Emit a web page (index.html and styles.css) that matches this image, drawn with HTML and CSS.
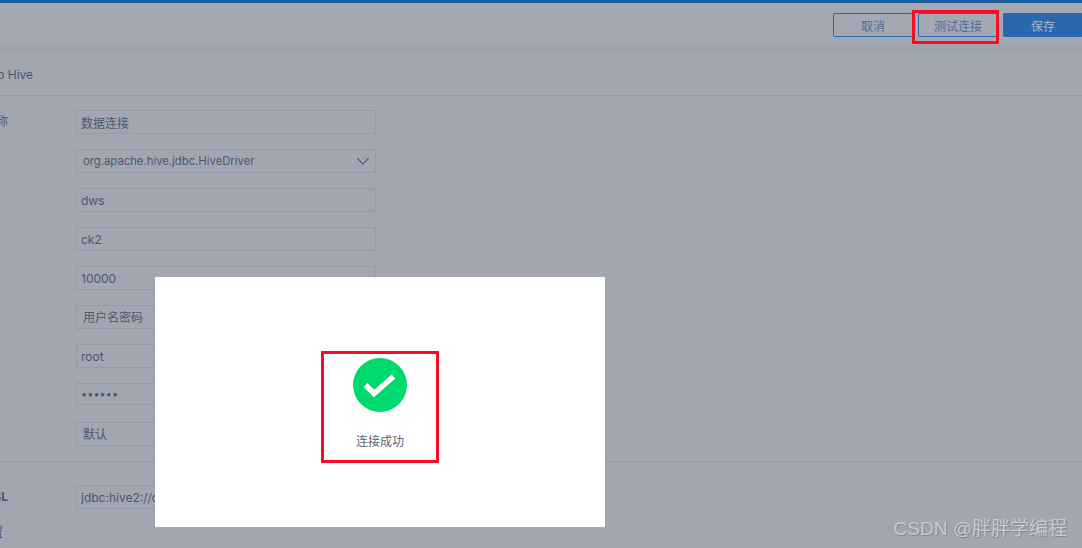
FILE: index.html
```html
<!DOCTYPE html>
<html lang="zh-CN">
<head>
  <meta charset="UTF-8">
  <title>数据连接</title>
  <link rel="stylesheet" href="styles.css">
</head>
<body>
  <div class="header">
    <button class="btn">取消</button>
    <button class="btn">测试连接</button>
    <button class="btn btn-primary">保存</button>
  </div>
  <div class="band"></div>

  <div class="panel">
    <div class="title">p Hive</div>
    <form class="form">
      <div class="row"><label>称</label><input class="field" type="text" value="数据连接"></div>
      <div class="row">
        <label></label>
        <div class="field select select-driver">
          <span class="driver">org.apache.hive.jdbc.HiveDriver</span>
          <svg width="12" height="7" viewBox="0 0 12 7"><path d="M.5.5L6 6l5.500-5.500" fill="none" stroke="#4d5a74" stroke-width="1.1"/></svg>
        </div>
      </div>
      <div class="row"><label></label><input class="field" type="text" value="dws"></div>
      <div class="row"><label></label><input class="field" type="text" value="ck2"></div>
      <div class="row"><label></label><input class="field" type="text" value="10000"></div>
      <div class="row"><label></label><div class="field select"><span>用户名密码</span></div></div>
      <div class="row"><label></label><input class="field" type="text" value="root"></div>
      <div class="row"><label></label><input class="field field-pass" type="password" value="123456"></div>
      <div class="row"><label></label><div class="field select"><span>默认</span></div></div>
      <hr class="divider">
      <div class="row"><label class="bold">BL</label><input class="field" type="text" value="jdbc:hive2://ck2:10000/dws"></div>
      <div class="row"><label class="last">置</label></div>
    </form>
  </div>

  <div class="mark mark-test"></div>

  <div class="dialog">
    <div class="result">
      <svg width="54" height="54" viewBox="0 0 54 54">
        <circle cx="27" cy="27" r="27" fill="#00d96b"/>
        <path d="M12.500 27l8.500 8.500L40.500 18.500" fill="none" stroke="#fff" stroke-width="5.500"/>
      </svg>
      <p>连接成功</p>
    </div>
  </div>

  <div class="watermark">CSDN @胖胖学编程</div>
</body>
</html>
```

FILE: styles.css
```css
* {
  box-sizing: border-box;
}

body {
  margin: 0;
  height: 548px;
  overflow: hidden;
  position: relative;
  background-color: #a2a6b0;
  font-family: Inter, "Noto Sans CJK SC", sans-serif;
  font-size: 12px;
  color: #4b5872;
}

.header {
  height: 45px;
  padding-top: 10px;
  margin-right: -1px;
  border-top: 3px solid #1a5d9c;
  background-color: #a4a8b2;
  display: flex;
  justify-content: flex-end;
  gap: 5px;
}

.btn {
  width: 80px;
  height: 24px;
  padding: 0;
  background: transparent;
  border: 1px solid #2a69ad;
  border-radius: 2px;
  font-family: inherit;
  font-size: 12px;
  color: #4d6c9e;
}

.btn-primary {
  background-color: #2a69ad;
  color: #a4b3c9;
}

.band {
  height: 9px;
  background-color: #9ea2ab;
}

.title {
  height: 42px;
  margin-left: -3px;
  padding-top: 13px;
  line-height: 16px;
  border-bottom: 1px solid #959aa6;
}

.form {
  margin-top: 14px;
}

.row {
  display: flex;
  align-items: flex-start;
  height: 24px;
  margin-bottom: 15px;
}

.row label {
  width: 76px;
  flex: none;
  display: flex;
  justify-content: flex-end;
  padding-right: 68px;
  line-height: 24px;
  white-space: nowrap;
}

.row label.bold {
  font-weight: 700;
}

.row label.last {
  padding-right: 73px;
  line-height: 18px;
}

.field {
  width: 300px;
  height: 24px;
  padding: 0 4px;
  background: transparent;
  border: 1px solid #959aa8;
  font-family: inherit;
  font-size: 12px;
  color: #4b5872;
  outline: none;
}

.field-pass {
  height: 22px;
  font-size: 11px;
}

.select {
  display: flex;
  align-items: center;
  justify-content: space-between;
  padding: 0 6px 2px 6px;
}

.select-driver {
  padding-bottom: 0;
}

.driver {
  font-size: 11.3px;
}

.divider {
  height: 1px;
  margin: 0 0 23px;
  border: 0;
  background-color: #959aa6;
}

.mark {
  border: 3px solid #f60c24;
}

.mark-test {
  position: absolute;
  left: 912px;
  top: 10px;
  width: 87px;
  height: 34px;
}

.dialog {
  position: absolute;
  left: 155px;
  top: 277px;
  width: 450px;
  height: 250px;
  background-color: #fff;
  display: flex;
  justify-content: center;
  padding-top: 74px;
}

.result {
  width: 118px;
  height: 112px;
  border: 3px solid #f60c24;
  padding-top: 4px;
  text-align: center;
}

.result svg {
  display: block;
  margin: 0 auto;
}

.result p {
  margin: 21px 0 0;
  line-height: 18px;
  color: #5a6478;
}

.watermark {
  position: absolute;
  right: 15px;
  top: 518px;
  font-family: "Liberation Sans", "Noto Sans CJK SC", sans-serif;
  font-size: 19px;
  line-height: 22px;
  color: #c9cacf;
  text-shadow: 1px 1px 1px #80838c;
}
```
